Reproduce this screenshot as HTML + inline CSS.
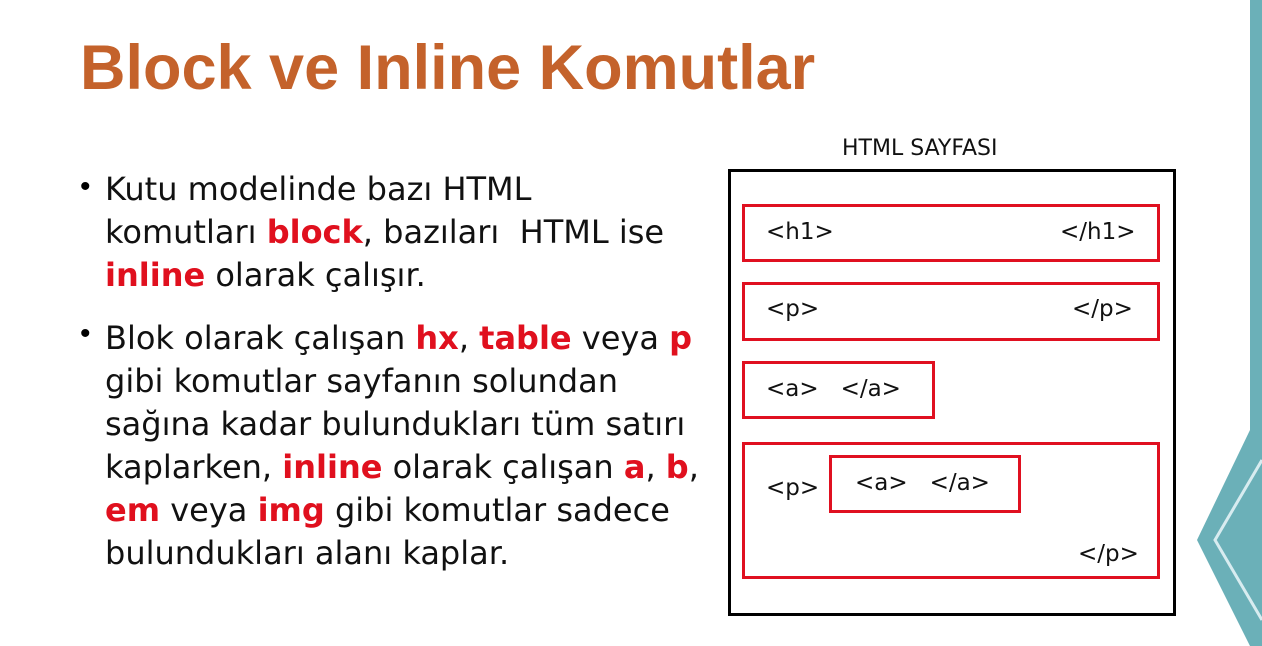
<!DOCTYPE html>
<html><head><meta charset="utf-8"><style>
body{margin:0;width:1262px;height:646px;background:#fff;position:relative;overflow:hidden;font-family:"Liberation Sans",sans-serif}
.t{position:absolute;left:80px;top:32px;font-size:63px;font-weight:bold;color:#c4622b;letter-spacing:0px}
.txt{position:absolute;left:105px;top:168px;font-family:"DejaVu Sans",sans-serif;font-size:32px;line-height:43px;color:#111;width:640px;white-space:nowrap}
.txt .r{color:#e0101e;font-weight:bold}
.b{position:absolute;left:80px;font-size:30px}
.box{position:absolute;border:3px solid #000;left:728px;top:169px;width:442px;height:441px}
.rb{position:absolute;border:3px solid #e01020;box-sizing:border-box}
.d{position:absolute;font-family:"DejaVu Sans",sans-serif;font-size:23px;color:#111;white-space:nowrap}
</style></head><body>
<div class="t">Block ve Inline Komutlar</div>
<div class="b" style="top:170px">•</div>
<div class="b" style="top:317px">•</div>
<div class="txt">Kutu modelinde bazı HTML<br>komutları <span class="r">block</span>, bazıları&nbsp; HTML ise<br><span class="r">inline</span> olarak çalışır.
<div style="height:20px"></div>
Blok olarak çalışan <span class="r">hx</span>, <span class="r">table</span> veya <span class="r">p</span><br>gibi komutlar sayfanın solundan<br>sağına kadar bulundukları tüm satırı<br>kaplarken, <span class="r">inline</span> olarak çalışan <span class="r">a</span>, <span class="r">b</span>,<br><span class="r">em</span> veya <span class="r">img</span> gibi komutlar sadece<br>bulundukları alanı kaplar.</div>
<div class="d" style="left:842px;top:136px;font-size:22px">HTML SAYFASI</div>
<div class="box"></div>
<div class="rb" style="left:742px;top:204px;width:418px;height:58px"></div>
<div class="d" style="left:766px;top:219px">&lt;h1&gt;</div><div class="d" style="left:1060px;top:219px">&lt;/h1&gt;</div>
<div class="rb" style="left:742px;top:282px;width:418px;height:59px"></div>
<div class="d" style="left:766px;top:296px">&lt;p&gt;</div><div class="d" style="left:1072px;top:296px">&lt;/p&gt;</div>
<div class="rb" style="left:742px;top:361px;width:193px;height:58px"></div>
<div class="d" style="left:766px;top:376px">&lt;a&gt;&nbsp;&nbsp; &lt;/a&gt;</div>
<div class="rb" style="left:742px;top:442px;width:418px;height:137px"></div>
<div class="d" style="left:766px;top:475px">&lt;p&gt;</div><div class="d" style="left:1078px;top:541px">&lt;/p&gt;</div>
<div class="rb" style="left:829px;top:455px;width:192px;height:58px"></div>
<div class="d" style="left:855px;top:470px">&lt;a&gt;&nbsp;&nbsp; &lt;/a&gt;</div>
<svg style="position:absolute;left:0;top:0" width="1262" height="646">
<rect x="1250" y="0" width="12" height="646" fill="#6bb0b8"/>
<polygon points="1250,430 1262,415 1262,646 1250,646 1197,540" fill="#6bb0b8"/>
<polyline points="1262,460 1215,540 1262,620" fill="none" stroke="#d8ecf0" stroke-width="3"/>
</svg>
</body></html>
